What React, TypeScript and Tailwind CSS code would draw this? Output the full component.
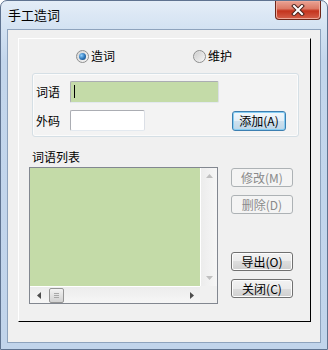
import React from 'react'

const cjk = "font-['Noto_Sans_CJK_SC','Noto_Sans',sans-serif]"

function Btn({
  label,
  disabled,
  primary,
  className,
}: {
  label: string
  disabled?: boolean
  primary?: boolean
  className?: string
}) {
  const tone = disabled
    ? 'border-[#adb2b5] bg-[#f4f4f4] text-[#8a8a8a]'
    : primary
      ? 'border-[#3c7fb1] bg-[linear-gradient(#f2f8fc_0%,#e4eff7_50%,#cfe1ee_50%,#bdd6e8_100%)] text-black shadow-[inset_0_0_0_1px_#86cdf2]'
      : 'border-[#707070] bg-[linear-gradient(#f2f2f2_0%,#ebebeb_50%,#dddddd_50%,#cfcfcf_100%)] text-black shadow-[inset_0_0_0_1px_#fcfcfc]'
  return (
    <div
      className={`flex items-center justify-center rounded-[3px] border text-[12px] leading-none ${tone} ${className ?? ''}`}
    >
      {label}
    </div>
  )
}

function Radio({ checked }: { checked?: boolean }) {
  return (
    <div className="flex h-[13px] w-[13px] items-center justify-center rounded-full border border-[#8e8f8f] bg-[linear-gradient(135deg,#d6d6d6,#f6f6f6)]">
      {checked ? (
        <div className="h-[7px] w-[7px] rounded-full bg-[radial-gradient(circle_at_35%_35%,#8fd0ff,#2a72b5_55%,#123f6e)]" />
      ) : (
        <div className="h-[9px] w-[9px] rounded-full bg-[linear-gradient(135deg,#cfcfcf,#f2f2f2)]" />
      )}
    </div>
  )
}

export default function App() {
  return (
    <div className={`h-[350px] w-[328px] bg-white ${cjk}`}>
      <div className="relative flex h-full w-full flex-col rounded-t-[7px] border border-[#5f7390] bg-[linear-gradient(to_bottom,#e4edf7_0px,#d3e2f2_28px,#c3d6ec_60px,#c1d4eb_100%)]">
        {/* title bar */}
        <div className="flex h-[28px] items-center pl-[7px] text-[13px] text-black">手工造词</div>
        <div className="absolute right-[6px] top-[0px] flex h-[19px] w-[46px] items-center justify-center rounded-b-[4px] border border-t-0 border-[#6e2618] bg-[linear-gradient(#e9a394_0%,#dc7a66_42%,#c4341d_55%,#d4604a_100%)] shadow-[inset_0_0_0_1px_#eea898]">
          <svg width="14" height="12" viewBox="0 0 14 12">
            <path d="M3 2 L11 10 M11 2 L3 10" stroke="#4a241e" strokeWidth="4" strokeLinecap="square" />
            <path d="M3 2 L11 10 M11 2 L3 10" stroke="#ffffff" strokeWidth="2" strokeLinecap="square" />
          </svg>
        </div>

        {/* client area */}
        <div className="mx-[6px] h-[314px] border border-[#8ea3bd] bg-[#f0f0f0]">
          <div className="ml-[10px] mt-[8px] flex h-[284px] w-[293px] flex-col border border-b-black border-l-white border-r-black border-t-white">
            {/* radios */}
            <div className="flex h-[34px] items-center pl-[57px] text-[12px] text-black">
              <div className="flex w-[117px] items-center gap-[2px]">
                <Radio checked />
                <span>造词</span>
              </div>
              <div className="flex items-center gap-[2px]">
                <Radio />
                <span>维护</span>
              </div>
            </div>

            {/* entry panel */}
            <div className="ml-[13px] h-[64px] w-[267px] rounded-[3px] border border-[#d5dfe5] bg-[#f3f3f3] shadow-[inset_0_0_0_1px_#fbfbfb]">
              <div className="flex items-center pl-[3px] pt-[7px]">
                <span className="w-[34px] text-[12px] text-black">词语</span>
                <div className="relative h-[22px] w-[149px] rounded-[2px] border border-[#abadb3] border-b-[#e3e9ef] border-r-[#dbdfe6] bg-[#c4dba8]">
                  <div className="absolute left-[3px] top-[3px] h-[13px] w-[1px] bg-black" />
                </div>
              </div>
              <div className="mt-[7px] flex items-center pl-[3px]">
                <span className="w-[34px] text-[12px] text-black">外码</span>
                <div className="h-[21px] w-[75px] rounded-[2px] border border-[#abadb3] border-b-[#e3e9ef] border-r-[#dbdfe6] bg-white" />
                <Btn label="添加(A)" primary className="ml-[87px] h-[20px] w-[54px]" />
              </div>
            </div>

            <div className="ml-[13px] mt-[12px] h-[16px] text-[12px] leading-[16px] text-black">词语列表</div>

            <div className="ml-[10px] mt-[2px] flex">
              {/* list box */}
              <div className="grid h-[137px] w-[189px] grid-cols-[170px_17px] grid-rows-[118px_17px] border border-[#828790]">
                <div className="bg-[#c4dba8]" />
                <div className="flex flex-col items-center justify-between border-l border-white bg-[linear-gradient(to_right,#ececec,#f6f6f6)] py-[6px]">
                  <svg width="7" height="4" viewBox="0 0 7 4">
                    <path d="M0 4 L3.5 0 L7 4 Z" fill="#bfbfbf" />
                  </svg>
                  <svg width="7" height="4" viewBox="0 0 7 4">
                    <path d="M0 0 L3.5 4 L7 0 Z" fill="#bfbfbf" />
                  </svg>
                </div>
                <div className="flex items-center border-t border-white bg-[linear-gradient(#ececec,#f6f6f6)]">
                  <div className="flex w-[17px] justify-center">
                    <svg width="4" height="7" viewBox="0 0 4 7">
                      <path d="M4 0 L0 3.5 L4 7 Z" fill="#4d4d4d" />
                    </svg>
                  </div>
                  <div className="ml-[2px] flex h-[15px] w-[15px] items-center justify-center rounded-[2px] border border-[#959595] bg-[linear-gradient(#f3f3f3,#e2e2e2_50%,#d2d2d2)]">
                    <div className="flex h-[5px] flex-col justify-between">
                      <div className="h-px w-[5px] bg-[#a8a8a8]" />
                      <div className="h-px w-[5px] bg-[#a8a8a8]" />
                      <div className="h-px w-[5px] bg-[#a8a8a8]" />
                    </div>
                  </div>
                  <div className="flex-1" />
                  <div className="flex w-[17px] justify-center">
                    <svg width="4" height="7" viewBox="0 0 4 7">
                      <path d="M0 0 L4 3.5 L0 7 Z" fill="#4d4d4d" />
                    </svg>
                  </div>
                </div>
                <div className="bg-[#f0f0f0]" />
              </div>

              {/* buttons */}
              <div className="ml-[13px] flex flex-col pt-[1px]">
                <Btn label="修改(M)" disabled className="h-[19px] w-[62px]" />
                <Btn label="删除(D)" disabled className="mt-[8px] h-[19px] w-[62px]" />
                <Btn label="导出(O)" className="mt-[38px] h-[19px] w-[62px]" />
                <Btn label="关闭(C)" className="mt-[8px] h-[19px] w-[62px]" />
              </div>
            </div>
          </div>
        </div>
      </div>
    </div>
  )
}
